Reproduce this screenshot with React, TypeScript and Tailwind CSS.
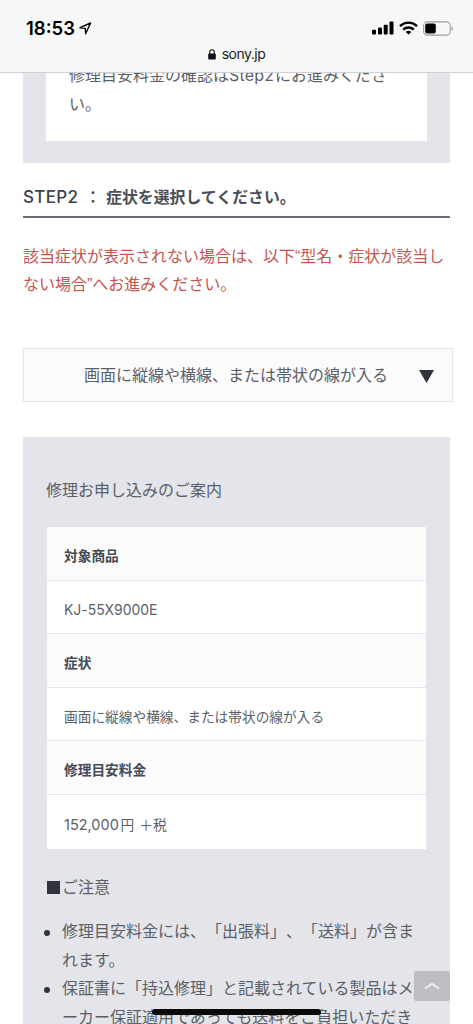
import React from "react";

type EstimateRow = {
  label: string;
  value: React.ReactNode;
};

// 英数字は字幅が広めの書体で表示する
const Latin: React.FC<{ children: React.ReactNode }> = ({ children }) => (
  <span className="font-['Inter','Liberation_Sans',sans-serif]">
    {children}
  </span>
);

const estimateRows: EstimateRow[] = [
  {
    label: "対象商品",
    value: (
      <span className="text-[14px] tracking-[-0.05px]">
        <Latin>KJ-55X9000E</Latin>
      </span>
    ),
  },
  { label: "症状", value: "画面に縦線や横線、または帯状の線が入る" },
  {
    label: "修理目安料金",
    value: (
      <span className="whitespace-pre">
        <span className="inline-block w-[56.5px] text-[14.5px]">
          <Latin>152,000</Latin>
        </span>
        円<span className="ml-[5px]">＋税</span>
      </span>
    ),
  },
];

// 改行位置を固定するため行ごとに持つ
const notes: string[][] = [
  ["修理目安料金には、「出張料」、「送料」が含ま", "れます。"],
  [
    "保証書に「持込修理」と記載されている製品はメ",
    "ーカー保証適用であっても送料をご負担いただき",
  ],
];

const StatusBar: React.FC = () => {
  return (
    <header className="relative z-10 h-[73px] bg-[#f6f7f7] border-b border-[#cfd0d3] text-black font-['Inter','Liberation_Sans',sans-serif]">
      <div className="flex items-center justify-between h-[40px] pt-[16px] pl-[26px] pr-[19px]">
        <div className="flex items-center gap-[3px]">
          <span className="w-[50px] text-[18.5px] leading-[24px] font-semibold">
            18:53
          </span>
          <svg width="13" height="13" viewBox="0 0 13 13" fill="none">
            <path
              d="M11.6 1 1 5.7l5.3.7.3 5.3z"
              stroke="currentColor"
              strokeWidth="1.4"
              strokeLinejoin="round"
            />
          </svg>
        </div>
        <div className="flex items-center">
          {/* 電波 */}
          <svg width="22" height="14" viewBox="0 0 22 14" fill="currentColor">
            <rect x="0" y="8.8" width="4" height="4.7" rx="1" />
            <rect x="6" y="6.5" width="4" height="7" rx="1" />
            <rect x="11.7" y="3.7" width="4" height="9.8" rx="1" />
            <rect x="17.5" y="0.5" width="4" height="13" rx="1" />
          </svg>
          {/* Wi-Fi */}
          <svg
            className="ml-[5px]"
            width="19"
            height="14"
            viewBox="0 0 19 14"
            fill="none"
            stroke="currentColor"
            strokeWidth="2.4"
          >
            <path d="M1 5.1a12.2 12.2 0 0 1 17 0" />
            <path d="M4.2 8.6a7.6 7.6 0 0 1 10.6 0" />
            <path
              d="M9.5 13.6 6.8 10.9a4 4 0 0 1 5.4 0z"
              fill="currentColor"
              stroke="none"
            />
          </svg>
          {/* バッテリー */}
          <svg
            className="ml-[5px]"
            width="31"
            height="15"
            viewBox="0 0 31 15"
            fill="none"
          >
            <rect
              x="0.6"
              y="0.9"
              width="26.6"
              height="13.2"
              rx="3.8"
              stroke="#9b9c9c"
              strokeWidth="1.1"
            />
            <rect x="2.2" y="2.6" width="10.6" height="9.8" rx="2" fill="#000" />
            <path d="M28.6 5.2c1.6.6 1.6 4 0 4.6z" fill="#8f9090" />
          </svg>
        </div>
      </div>
      <div className="flex items-center justify-center h-[28px] gap-[6px] text-[14px] leading-[20px]">
        <svg width="8" height="11" viewBox="0 0 8 11">
          <rect x="0.2" y="4.4" width="7.6" height="6" rx="1" fill="#111" />
          <path
            d="M1.8 5V3a2.2 2.2 0 0 1 4.4 0v2"
            fill="none"
            stroke="#111"
            strokeWidth="1.1"
          />
        </svg>
        <span className="tracking-[-0.5px] text-[#1c1c1e]">sony.jp</span>
      </div>
    </header>
  );
};

const EstimateTable: React.FC = () => {
  return (
    <dl className="mx-px mt-[21.7px] bg-white text-[13.7px] leading-[20px] divide-y divide-[#e6e7ec]">
      {estimateRows.map((row) => (
        <React.Fragment key={row.label}>
          <dt className="h-[53.6px] flex items-center pl-[17px] pt-[7px] bg-[#fbfbfc] font-bold text-[#454a53]">
            {row.label}
          </dt>
          <dd className="h-[53.6px] flex items-center pl-[17px] pt-[7px]">
            {row.value}
          </dd>
        </React.Fragment>
      ))}
    </dl>
  );
};

const App: React.FC = () => {
  return (
    <div className="relative w-[473px] h-[1024px] overflow-hidden bg-white text-[#5a5f67] text-[16px] leading-[28.6px] whitespace-nowrap [text-spacing-trim:space-all] font-['Liberation_Sans','Noto_Sans_CJK_JP',sans-serif]">
      <StatusBar />

      <main className="-mt-[12px] pl-[23px] pr-[23px]">
        {/* STEP1 の末尾 */}
        <section className="bg-[#e4e5ea] px-[23px] pb-[22.5px]">
          <div className="h-[79.5px] bg-white pl-[23px]">
            <p>
              修理目安料金の確認は
              <span className="inline-block w-[46px] tracking-[0.2px]">
                <Latin>Step2</Latin>
              </span>
              にお進みくださ
              <br />
              い。
            </p>
          </div>
        </section>

        <h2 className="mt-[20px] h-[35px] border-b-2 border-[#6a6e76] font-medium text-[#3d424b] whitespace-pre">
          <span className="inline-block w-[57px] text-[17px] tracking-[0.3px]">
            <Latin>STEP2</Latin>
          </span>
          <span className="inline-block w-[26px] text-center">：</span>
          <span className="font-bold text-[15.9px] text-[#4a4f58]">
            症状を選択してください。
          </span>
        </h2>

        <p className="mt-[24.5px] text-[#c4554e]">
          該当症状が表示されない場合は、以下“型名・症状が該当し
          <br />
          ない場合”へお進みください。
        </p>

        <button className="mt-[48.5px] w-[430px] h-[54px] flex items-center justify-between border border-[#e4e5ea] bg-[#fbfbfc] pl-[60px] pr-[18px]">
          <span className="pt-[3px]">画面に縦線や横線、または帯状の線が入る</span>
          <svg
            className="mt-[2px]"
            width="15"
            height="13"
            viewBox="0 0 15 13"
          >
            <path d="M0 0h15L7.5 13z" fill="#2f343d" />
          </svg>
        </button>

        <section className="mt-[34.5px] h-[600px] bg-[#e4e5ea] px-[23px] pt-[40px]">
          <h3>修理お申し込みのご案内</h3>
          <EstimateTable />

          <p className="mt-[24px] flex items-center gap-[3px]">
            <span className="ml-[1px] size-[13px] bg-[#2f343d]" />
            <span className="-ml-px pt-px">ご注意</span>
          </p>
          <ul className="mt-[16px]">
            {notes.map((lines) => (
              <li key={lines[0]} className="flex -ml-[2px]">
                <span className="mt-[12px] mr-[12px] size-[6px] shrink-0 rounded-full bg-[#2f343d]" />
                <span>
                  {lines[0]}
                  <br />
                  {lines[1]}
                </span>
              </li>
            ))}
          </ul>
        </section>
      </main>

      {/* ページトップへ戻る */}
      <button className="absolute left-[414px] top-[971px] w-[36px] h-[30px] flex items-center justify-center rounded-[2px] bg-[#bdbec2]">
        <svg width="16" height="8" viewBox="0 0 16 8" fill="none">
          <path d="M1 6.5 8 2l7 4.5" stroke="#eeeff1" strokeWidth="2" />
        </svg>
      </button>

      {/* ホームインジケーター */}
      <div className="absolute left-[152px] top-[1009px] w-[169px] h-[6px] rounded-full bg-[#0b0b0c]" />
    </div>
  );
};

export default App;
